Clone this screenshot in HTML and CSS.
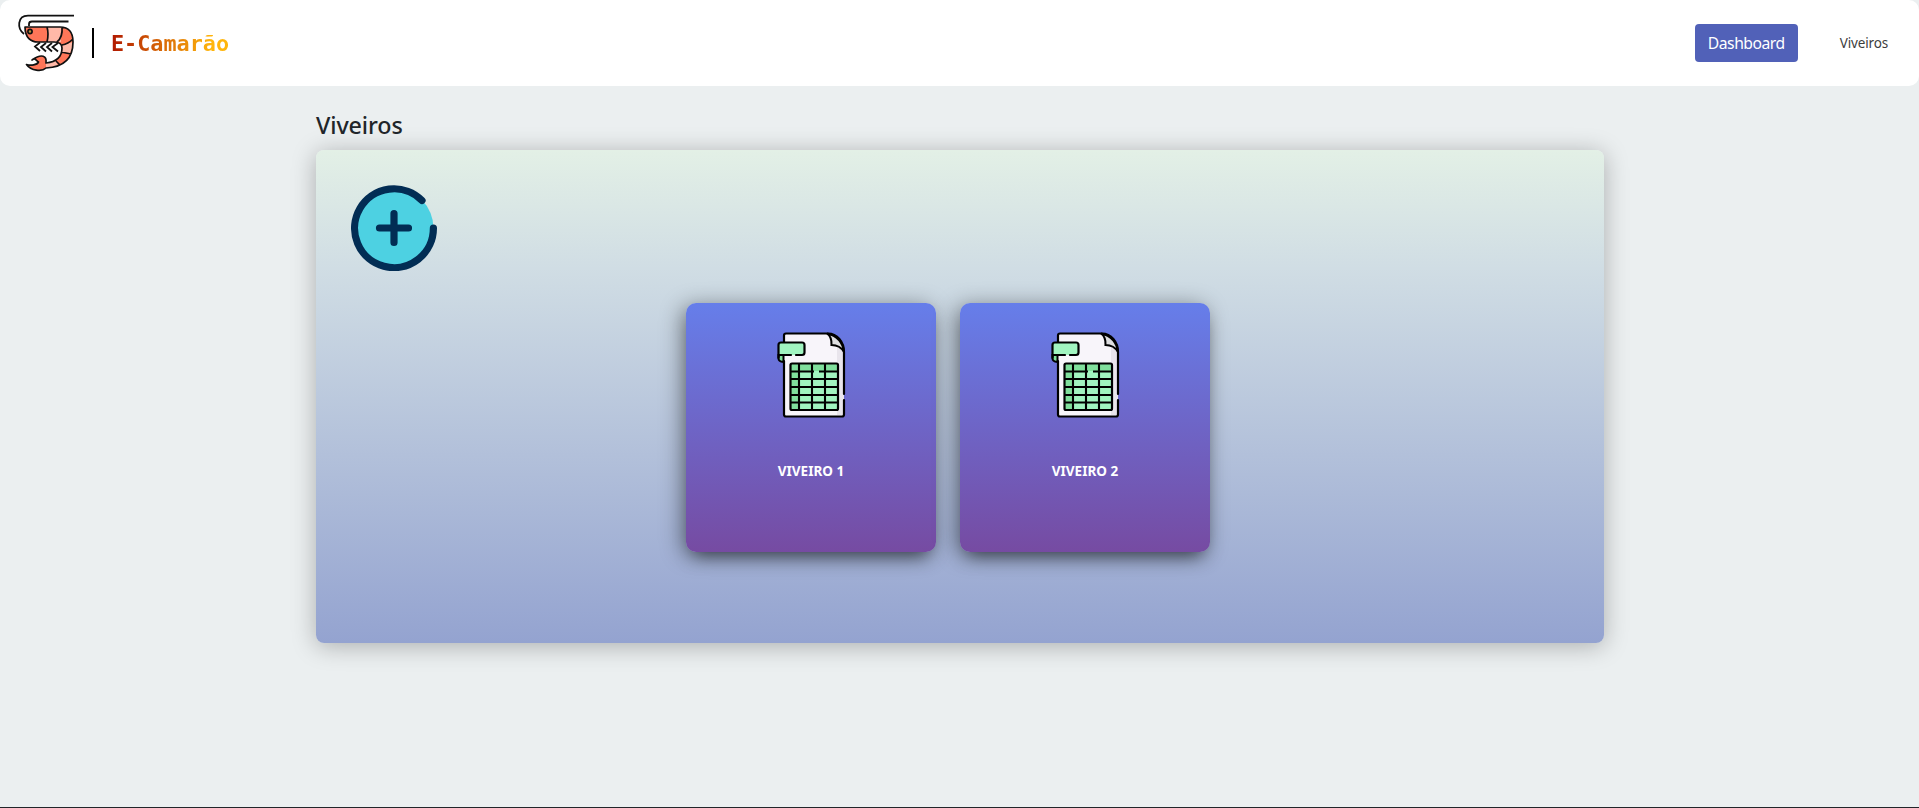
FILE: index.html
```html
<!DOCTYPE html>
<html lang="pt-BR">
<head>
<meta charset="utf-8">
<title>E-Camarão</title>
<link rel="stylesheet" href="styles.css">
</head>
<body>
<svg class="defs" width="0" height="0" aria-hidden="true">
  <symbol id="sheet" viewBox="0 0 110 110">
    <path d="M24.500 14.500H68C77 14.500 84 23 84 33V95Q84 97.500 81.500 97.500H26.500Q24 97.500 24 95V17Z" fill="#f8f5fa"/>
    <path d="M77 28L84 32V96H77Z" fill="#e9e5ec"/>
    <path d="M24 42V95.500Q24 97.500 26 97.500H82Q84 97.500 84 95.500V81M84 75V33C84 23 77 14.500 68 14.500H26Q24 14.500 24 16.500V24" fill="none" stroke="#000" stroke-width="2.200" stroke-linecap="round"/>
    <path d="M67 14.500Q72 18 71.500 26Q80 26 84 33Q82 18 67 14.500Z" fill="#dfdfe1" stroke="#000" stroke-width="2"/>
    <path d="M18.500 36V39.500Q18.500 42.500 23.500 43V36Z" fill="#7fe19a" stroke="#000" stroke-width="2"/>
    <path d="M21 23.500H42Q44.500 23.500 44.500 26V33.500Q44.500 36 42 36H18.500V26Q18.500 23.500 21 23.500Z" fill="#a1f4c0"/>
    <path d="M31 36H20Q18.500 36 18.500 39.500V26Q18.500 23.500 21 23.500H42Q44.500 23.500 44.500 26V33.500Q44.500 36 42 36H36" fill="none" stroke="#000" stroke-width="2.200" stroke-linecap="round"/>
    <rect x="30.500" y="44.500" width="47.500" height="46.500" rx="1.500" fill="#a1f4c0"/>
    <path d="M30.500 44.500H78V52H39V91H30.500Z" fill="#80df9c"/>
    <path d="M39 45V91M52 45V91M65 45V91M31 52.500H54M59 52.500H78M31 60H78M31 68H78M31 76H78M31 83.500H78" stroke="#000" stroke-width="2.100"/>
    <rect x="30.500" y="44.500" width="47.500" height="46.500" rx="1.500" fill="none" stroke="#000" stroke-width="2.200"/>
  </symbol>
</svg>
<header class="navbar">
  <a class="brand">
    <svg class="logo" viewBox="10 5 75 75" width="75" height="75">
      <path d="M24 34C17 29 17 15.700 28 15.700H74M29 26V24Q29 21.500 32 21.500H68.500" fill="none" stroke="#111" stroke-width="1.800"/>
      <path d="M25 27H60C69 27 73 33 73 42C73 57 66 67 46 68C42 72 31 71 26.500 64.500C31 66 37 65 38.500 62C36 60 34 57 32 60C42 53 47 56 46 63C55 62 62 58 62 48C62 43 58 42 54 42H38C31 42 25 38 25 27Z" fill="#ff7658"/>
      <path d="M47 27H62Q60 32 61 42H47Q49 34 47 27ZM62.500 45L73 42Q73 49 70 53L61.500 52ZM46 63L56 61L58 66L46 68Z" fill="#ffb9a8"/>
      <path d="M25 27H60C69 27 73 33 73 42C73 57 66 67 46 68C42 72 31 71 26.500 64.500C31 66 37 65 38.500 62C36 60 34 57 32 60C42 53 47 56 46 63C55 62 62 58 62 48C62 43 58 42 54 42H38C31 42 25 38 25 27ZM47 27Q49 34 47 42M62 27Q63 37 57 42M62 45Q68 44 73 39M61 52L71 54M56 61L60 65" fill="none" stroke="#111" stroke-width="1.700" stroke-linejoin="round"/>
      <path d="M40 42.500L35 46.500L40 51M46 43L41 47L46 51.500M52 43L47 47L52 51.500M58 43L52.500 47L58 51.500" fill="none" stroke="#111" stroke-width="1.800"/>
      <circle cx="30" cy="31.500" r="2.100" fill="#b9953b" stroke="#111" stroke-width="1.700"/>
    </svg>
    <span class="divider"></span>
    <span class="brand-name">E-Camarão</span>
  </a>
  <nav class="links">
    <a class="link link-active">Dashboard</a>
    <a class="link">Viveiros</a>
  </nav>
</header>
<main class="content">
  <h1 class="title">Viveiros</h1>
  <section class="panel">
    <svg class="add" viewBox="0 0 86 86" width="86" height="86">
      <circle cx="43" cy="43" r="39.500" fill="#4dd1e2"/>
      <path d="M71 15.500A39.400 39.400 0 1 0 82.400 43M43 28.500V57.500M28.500 43H57.500" fill="none" stroke="#022d54" stroke-width="7.200" stroke-linecap="round"/>
    </svg>
    <div class="cards">
      <article class="card"><svg class="sheet" width="110" height="110"><use href="#sheet"/></svg><span class="card-name">VIVEIRO 1</span></article>
      <article class="card"><svg class="sheet" width="110" height="110"><use href="#sheet"/></svg><span class="card-name">VIVEIRO 2</span></article>
    </div>
  </section>
</main>
</body>
</html>
```
FILE: styles.css
```css
* { box-sizing: border-box; }
body {
  margin: 0;
  height: 808px;
  overflow: hidden;
  background: #ebeff0;
  border-bottom: 1px solid #212529;
  font-family: "Noto Sans", "Open Sans", sans-serif;
  color: #212529;
}
.defs { display: block; }
.navbar {
  display: flex;
  justify-content: space-between;
  align-items: center;
  height: 86px;
  padding: 0 19px 0 10px;
  background: #fff;
  border-radius: 10px;
}
.brand { display: flex; align-items: center; }
.logo { margin-bottom: 1px; }
.divider { width: 2px; height: 30px; margin: 0 17px 0 7px; background: #000; }
.brand-name {
  padding-top: 1px;
  font: bold 21.800px/30px "DejaVu Sans Mono", monospace;
  background: linear-gradient(to right, #b01800, #ffb50c 85%);
  -webkit-background-clip: text;
  background-clip: text;
  color: transparent;
}
.links { display: flex; align-items: center; gap: 30px; }
.link { padding: 0 12px; font-size: 13.500px; letter-spacing: -.15px; line-height: 38px; color: #3d3d3d; }
.link-active {
  width: 103px;
  padding: 0;
  text-align: center;
  font-size: 15.700px;
  letter-spacing: -.5px;
  color: #fff;
  background: #5161b8;
  border-radius: 4px;
}
.content { width: 1288px; margin: 0 auto 0 316px; padding-top: 23px; }
.title { margin: 0; height: 41px; font-size: 23.300px; letter-spacing: -.1px; line-height: 32px; font-weight: 500; }
.panel {
  height: 493px;
  padding: 35px;
  border-radius: 8px;
  background: linear-gradient(#e3f0e6 0%, #d0dde4 24%, #94a3d0 100%);
  box-shadow: 0 3px 25px rgba(0, 0, 0, .28);
}
.add { display: block; }
.cards { display: flex; gap: 24px; margin: 32px 0 0 335px; }
.card {
  display: flex;
  flex-direction: column;
  align-items: center;
  width: 250px;
  height: 249px;
  padding-top: 16px;
  border-radius: 10px;
  background: linear-gradient(#667eea, #764ba2);
  box-shadow: 0 11px 18px -8px rgba(0, 0, 0, .5), -4px 3px 22px rgba(0, 0, 0, .4);
}
.sheet { display: block; margin-left: 7px; }
.card-name { margin-top: 32px; font-size: 13.500px; line-height: 20px; font-weight: 700; color: #fff; }
```
